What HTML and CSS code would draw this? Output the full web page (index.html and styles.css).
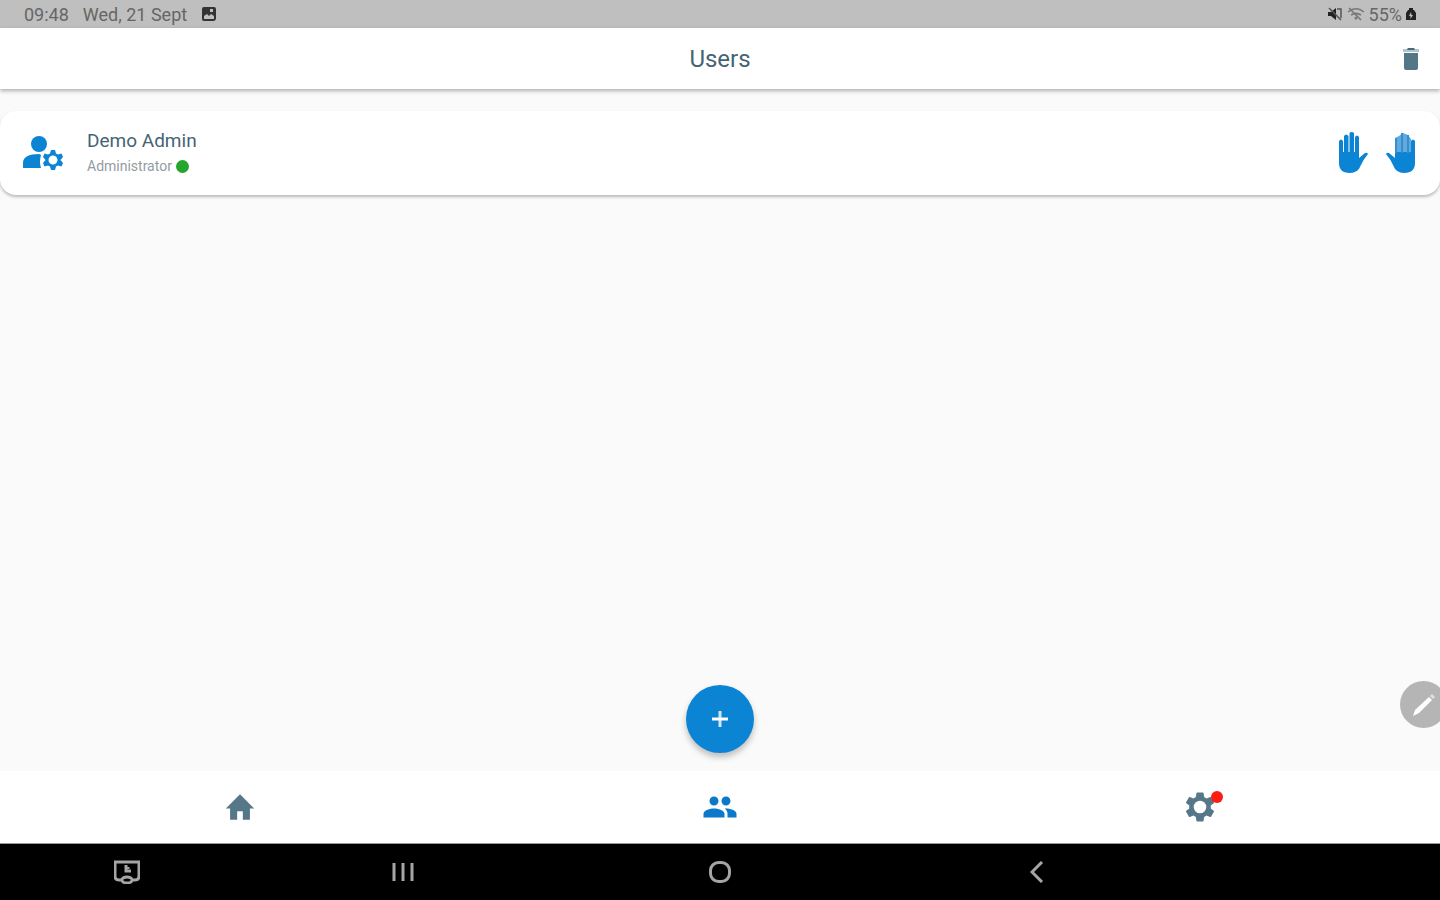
FILE: index.html
```html
<!DOCTYPE html>
<html lang="en">
<head>
<meta charset="UTF-8">
<meta name="viewport" content="width=device-width, initial-scale=1.0">
<title>Users</title>
<link rel="stylesheet" href="styles.css">
</head>
<body>
<div class="status-bar">
  <div class="status-left">
    <span>09:48</span>
    <span>Wed, 21 Sept</span>
    <svg width="16" height="16" viewBox="0 0 16 16">
      <path fill="#333" fill-rule="evenodd" d="M3 1h10a2 2 0 0 1 2 2v9a3 3 0 0 1-3 3H3a2 2 0 0 1-2-2V3a2 2 0 0 1 2-2zm0 9v3h10v-3l-3-2-2 2-2-2zM9 3v3h3V3z"/>
    </svg>
  </div>
  <div class="status-right">
    <svg width="16" height="14" viewBox="0 0 16 14">
      <path fill="#222" d="M1 5h3l5-4v12L4 9H1z"/>
      <path fill="none" stroke="#555" stroke-width="1.5" d="M2 1l12 12M10 2h4v9"/>
    </svg>
    <svg width="18" height="14" viewBox="0 0 18 14">
      <path fill="none" stroke="#777" stroke-width="1.6" d="M1 5c5-4 11-4 16 0M4 8c3-2 7-2 10 0M2 1l12 12"/>
      <circle cx="9" cy="11" r="1.5" fill="#777"/>
    </svg>
    <span>55%</span>
    <svg width="10" height="14" viewBox="0 0 10 14">
      <path fill="#222" fill-rule="evenodd" d="M3 1h4v2h1l2 3v7H0V6l2-3h1zm2 4L3 9h1.500v3L7 8H5.500z"/>
    </svg>
  </div>
</div>

<header class="app-bar">
  <h1>Users</h1>
  <button class="icon-button" aria-label="Delete">
    <svg width="18" height="24" viewBox="0 0 18 24">
      <path fill="#b5c4cb" d="M1 2h4l1-1h6l1 1h4v3H1z"/>
      <path fill="#456b7d" d="M6 1h6l1 2H5z"/>
      <path fill="#527888" d="M2 6h14v15a2 2 0 0 1-2 2H4a2 2 0 0 1-2-2z"/>
    </svg>
  </button>
</header>

<main class="content">
  <div class="user-card">
    <svg class="avatar" width="40" height="36" viewBox="0 0 40 36">
      <circle cx="16" cy="9" r="8"/>
      <path d="M0 33v-5c0-6 6-9 16-9l2 1q-2 7 0 13z"/>
      <path fill-rule="evenodd" d="M28 15h4l1 3.500 2 1 3.500-1 1.500 3.500-2.500 3 2.500 3-1.500 3.500-3.500-1-2 1-1 3.500h-4l-1-3.500-2-1-3.500 1-1.500-3.500 2.500-3-2.500-3 1.500-3.500 3.500 1 2-1zM30 20.500a4.500 4.500 0 1 0 0 9 4.500 4.500 0 0 0 0-9z"/>
    </svg>
    <div class="user-info">
      <h2>Demo Admin</h2>
      <p>Administrator <span class="online"></span></p>
    </div>
    <div class="hands">
      <button class="icon-button" aria-label="Left hand">
        <svg width="30" height="42" viewBox="0 0 30 42">
          <path fill="#0b84d3" d="M1 22V9q2-3 4 0v11h1V4q2-3 4.500 0v16h1V1q2.200-2 4.500 0v19h1V5q2-3 4 0v21l6-5q2-1 3 1-5 6-7 11-3 8-11 8C4 41 1 37 1 31z"/>
        </svg>
      </button>
      <button class="icon-button" aria-label="Right hand">
        <svg class="flip" width="30" height="42" viewBox="0 0 30 42">
          <path fill="#62a9dd" d="M5 7l3-4 5-2 4 3 4 2v16H5z"/>
          <path fill="#0b84d3" d="M1 22V9q2-3 4 0v11h16v6l6-5q2-1 3 1-5 6-7 11-3 8-11 8C4 41 1 37 1 31z"/>
          <path fill="none" stroke="#338fd0" stroke-width="2" d="M8 3v18M14 1v20M20 6v15"/>
        </svg>
      </button>
    </div>
  </div>

  <button class="fab" aria-label="Add user">
    <svg width="18" height="18" viewBox="0 0 18 18">
      <path stroke="#d4e5fa" stroke-width="3" d="M9 1v16"/>
      <path stroke="#fff" stroke-width="3" d="M1 9h16"/>
    </svg>
  </button>
</main>

<nav class="tabs">
  <a href="#" aria-label="Home">
    <svg width="34" height="34" viewBox="0 0 24 24"><path d="M10 21v-6h4v6h5v-8h3L12 3 2 13h3v8z"/></svg>
  </a>
  <a href="#" class="active" aria-label="Users">
    <svg width="36" height="36" viewBox="0 0 24 24"><path d="M16 11c1.660 0 2.990-1.340 2.990-3S17.660 5 16 5s-3 1.340-3 3 1.340 3 3 3zm-8 0c1.660 0 2.990-1.340 2.990-3S9.660 5 8 5 5 6.340 5 8s1.340 3 3 3zm0 2c-2.330 0-7 1.170-7 3.500V19h14v-2.500c0-2.330-4.670-3.500-7-3.500zm8 0c-.29 0-.62.02-.97.05 1.160.84 1.970 1.970 1.970 3.450V19h6v-2.500c0-2.330-4.670-3.500-7-3.500z"/></svg>
  </a>
  <a href="#" aria-label="Settings">
    <span class="badge-wrap">
      <svg width="36" height="36" viewBox="0 0 24 24"><path d="M19.140 12.940c.04-.3.060-.61.060-.94 0-.32-.02-.64-.07-.94l2.030-1.580c.18-.14.230-.41.120-.61l-1.920-3.320c-.12-.22-.37-.29-.59-.22l-2.390.96c-.5-.38-1.030-.7-1.620-.94l-.36-2.540c-.04-.24-.24-.41-.48-.41h-3.840c-.24 0-.43.17-.47.41l-.36 2.540c-.59.24-1.130.57-1.620.94l-2.390-.96c-.22-.08-.47 0-.59.220L2.740 8.870c-.12.210-.08.470.12.610l2.030 1.580c-.05.300-.09.630-.09.940s.02.640.070.940l-2.030 1.580c-.18.140-.23.410-.12.610l1.920 3.320c.12.220.37.290.59.220l2.390-.96c.5.380 1.030.7 1.620.94l.36 2.540c.05.240.24.410.48.410h3.840c.24 0 .44-.17.470-.41l.36-2.540c.59-.24 1.130-.56 1.620-.94l2.390.96c.22.080.47 0 .59-.22l1.920-3.320c.12-.22.070-.47-.12-.61l-2.010-1.580zM12 16.200a4.200 4.200 0 1 1 0-8.400 4.200 4.200 0 0 1 0 8.400z" fill-rule="evenodd"/></svg>
      <span class="badge"></span>
    </span>
  </a>
</nav>

<div class="system-nav">
  <button aria-label="Screen capture">
    <svg width="26" height="24" viewBox="0 0 26 24">
      <path d="M8 20H5q-4 0-4-4V2h24v14q0 4-4 4h-3"/>
      <ellipse cx="13" cy="20" rx="5" ry="3"/>
      <path d="M12 5v6h5M14 7v2"/>
    </svg>
  </button>
  <button aria-label="Recent apps">
    <svg width="22" height="20" viewBox="0 0 22 20"><path d="M2 1v18M11 1v18M20 1v18"/></svg>
  </button>
  <button aria-label="Home screen">
    <svg width="24" height="24" viewBox="0 0 24 24"><rect x="2.500" y="2.500" width="19" height="19" rx="8"/></svg>
  </button>
  <button aria-label="Back">
    <svg width="14" height="22" viewBox="0 0 14 22"><path d="M12 1L2 11l10 10"/></svg>
  </button>
</div>

<!-- floating edit handle, sits half over the screen edge -->
<button class="edit-handle" aria-label="Edit">
  <svg width="24" height="24" viewBox="0 0 24 24">
    <path fill="#fff" d="M1 23l2-6L17 4l3 3L7 20z"/>
    <path fill="#e0e0e0" d="M18 3l2-2 3 3-2 2z"/>
  </svg>
</button>
</body>
</html>
```

FILE: styles.css
```css
* {
  box-sizing: border-box;
}
body {
  margin: 0;
  height: 100vh;
  display: flex;
  flex-direction: column;
  position: relative;
  overflow: hidden;
  background-color: #fafafa;
  font-family: Roboto, sans-serif;
  color: #456473;
}
h1, h2, p {
  margin: 0;
  font-weight: 400;
}
button {
  padding: 0;
  border: none;
  background: none;
  cursor: pointer;
}
svg {
  display: block;
}
.status-bar {
  display: flex;
  justify-content: space-between;
  align-items: center;
  height: 28px;
  padding: 0 24px;
  background-color: #bfbfbf;
  color: #666;
  font-size: 18px;
}
.status-left {
  display: flex;
  align-items: center;
  gap: 14px;
}
.status-right {
  display: flex;
  align-items: center;
  gap: 4px;
}
.app-bar {
  display: grid;
  grid-template-columns: 1fr auto 1fr;
  align-items: center;
  height: 61px;
  padding: 0 20px;
  background-color: white;
  box-shadow: 0 2px 4px rgba(0, 0, 0, 0.3);
}
.app-bar h1 {
  grid-column: 2;
  font-size: 24px;
}
.app-bar .icon-button {
  justify-self: end;
}
.content {
  flex: 1;
  display: flex;
  flex-direction: column;
  justify-content: space-between;
  align-items: center;
  padding: 22px 0 18px;
}
.user-card {
  width: 100%;
  height: 84px;
  display: flex;
  align-items: center;
  gap: 24px;
  padding: 0 24px 0 23px;
  background-color: white;
  border-radius: 16px;
  box-shadow: 0 2px 3px rgba(0, 0, 0, 0.26);
}
.avatar {
  fill: #0b84d3;
}
.user-info {
  flex: 1;
}
.user-info h2 {
  font-size: 19px;
  line-height: 26px;
}
.user-info p {
  display: flex;
  align-items: center;
  gap: 4px;
  font-size: 14px;
  line-height: 24px;
  color: #929da3;
}
.online {
  width: 13px;
  height: 13px;
  border-radius: 50%;
  background-color: #25a52b;
}
.hands {
  display: flex;
  gap: 18px;
}
.flip {
  transform: scaleX(-1);
}
.fab {
  width: 68px;
  height: 68px;
  display: flex;
  align-items: center;
  justify-content: center;
  border-radius: 50%;
  background-color: #0b84d3;
  box-shadow: 0 4px 6px rgba(0, 0, 0, 0.25);
}
.tabs {
  display: flex;
  height: 73px;
  background-color: white;
  border-bottom: 1px solid #999;
}
.tabs a {
  flex: 1;
  display: flex;
  align-items: center;
  justify-content: center;
}
.tabs svg {
  fill: #557788;
}
.tabs .active svg {
  fill: #0b78c9;
}
.badge-wrap {
  position: relative;
}
.badge {
  position: absolute;
  top: 2px;
  right: -5px;
  width: 12px;
  height: 12px;
  border-radius: 50%;
  background-color: #fb1d14;
}
.system-nav {
  display: grid;
  grid-template-columns: 17fr 22fr 22fr 22fr 17fr;
  align-items: center;
  justify-items: center;
  height: 56px;
  background-color: black;
}
.system-nav button:first-child {
  padding-left: 10px;
}
.system-nav svg {
  fill: none;
  stroke: #a5a5a5;
  stroke-width: 3;
}
.edit-handle {
  position: absolute;
  right: -7px;
  bottom: 172px;
  width: 47px;
  height: 47px;
  display: flex;
  align-items: center;
  justify-content: center;
  border-radius: 50%;
  background-color: #b5b5b5;
}
```
